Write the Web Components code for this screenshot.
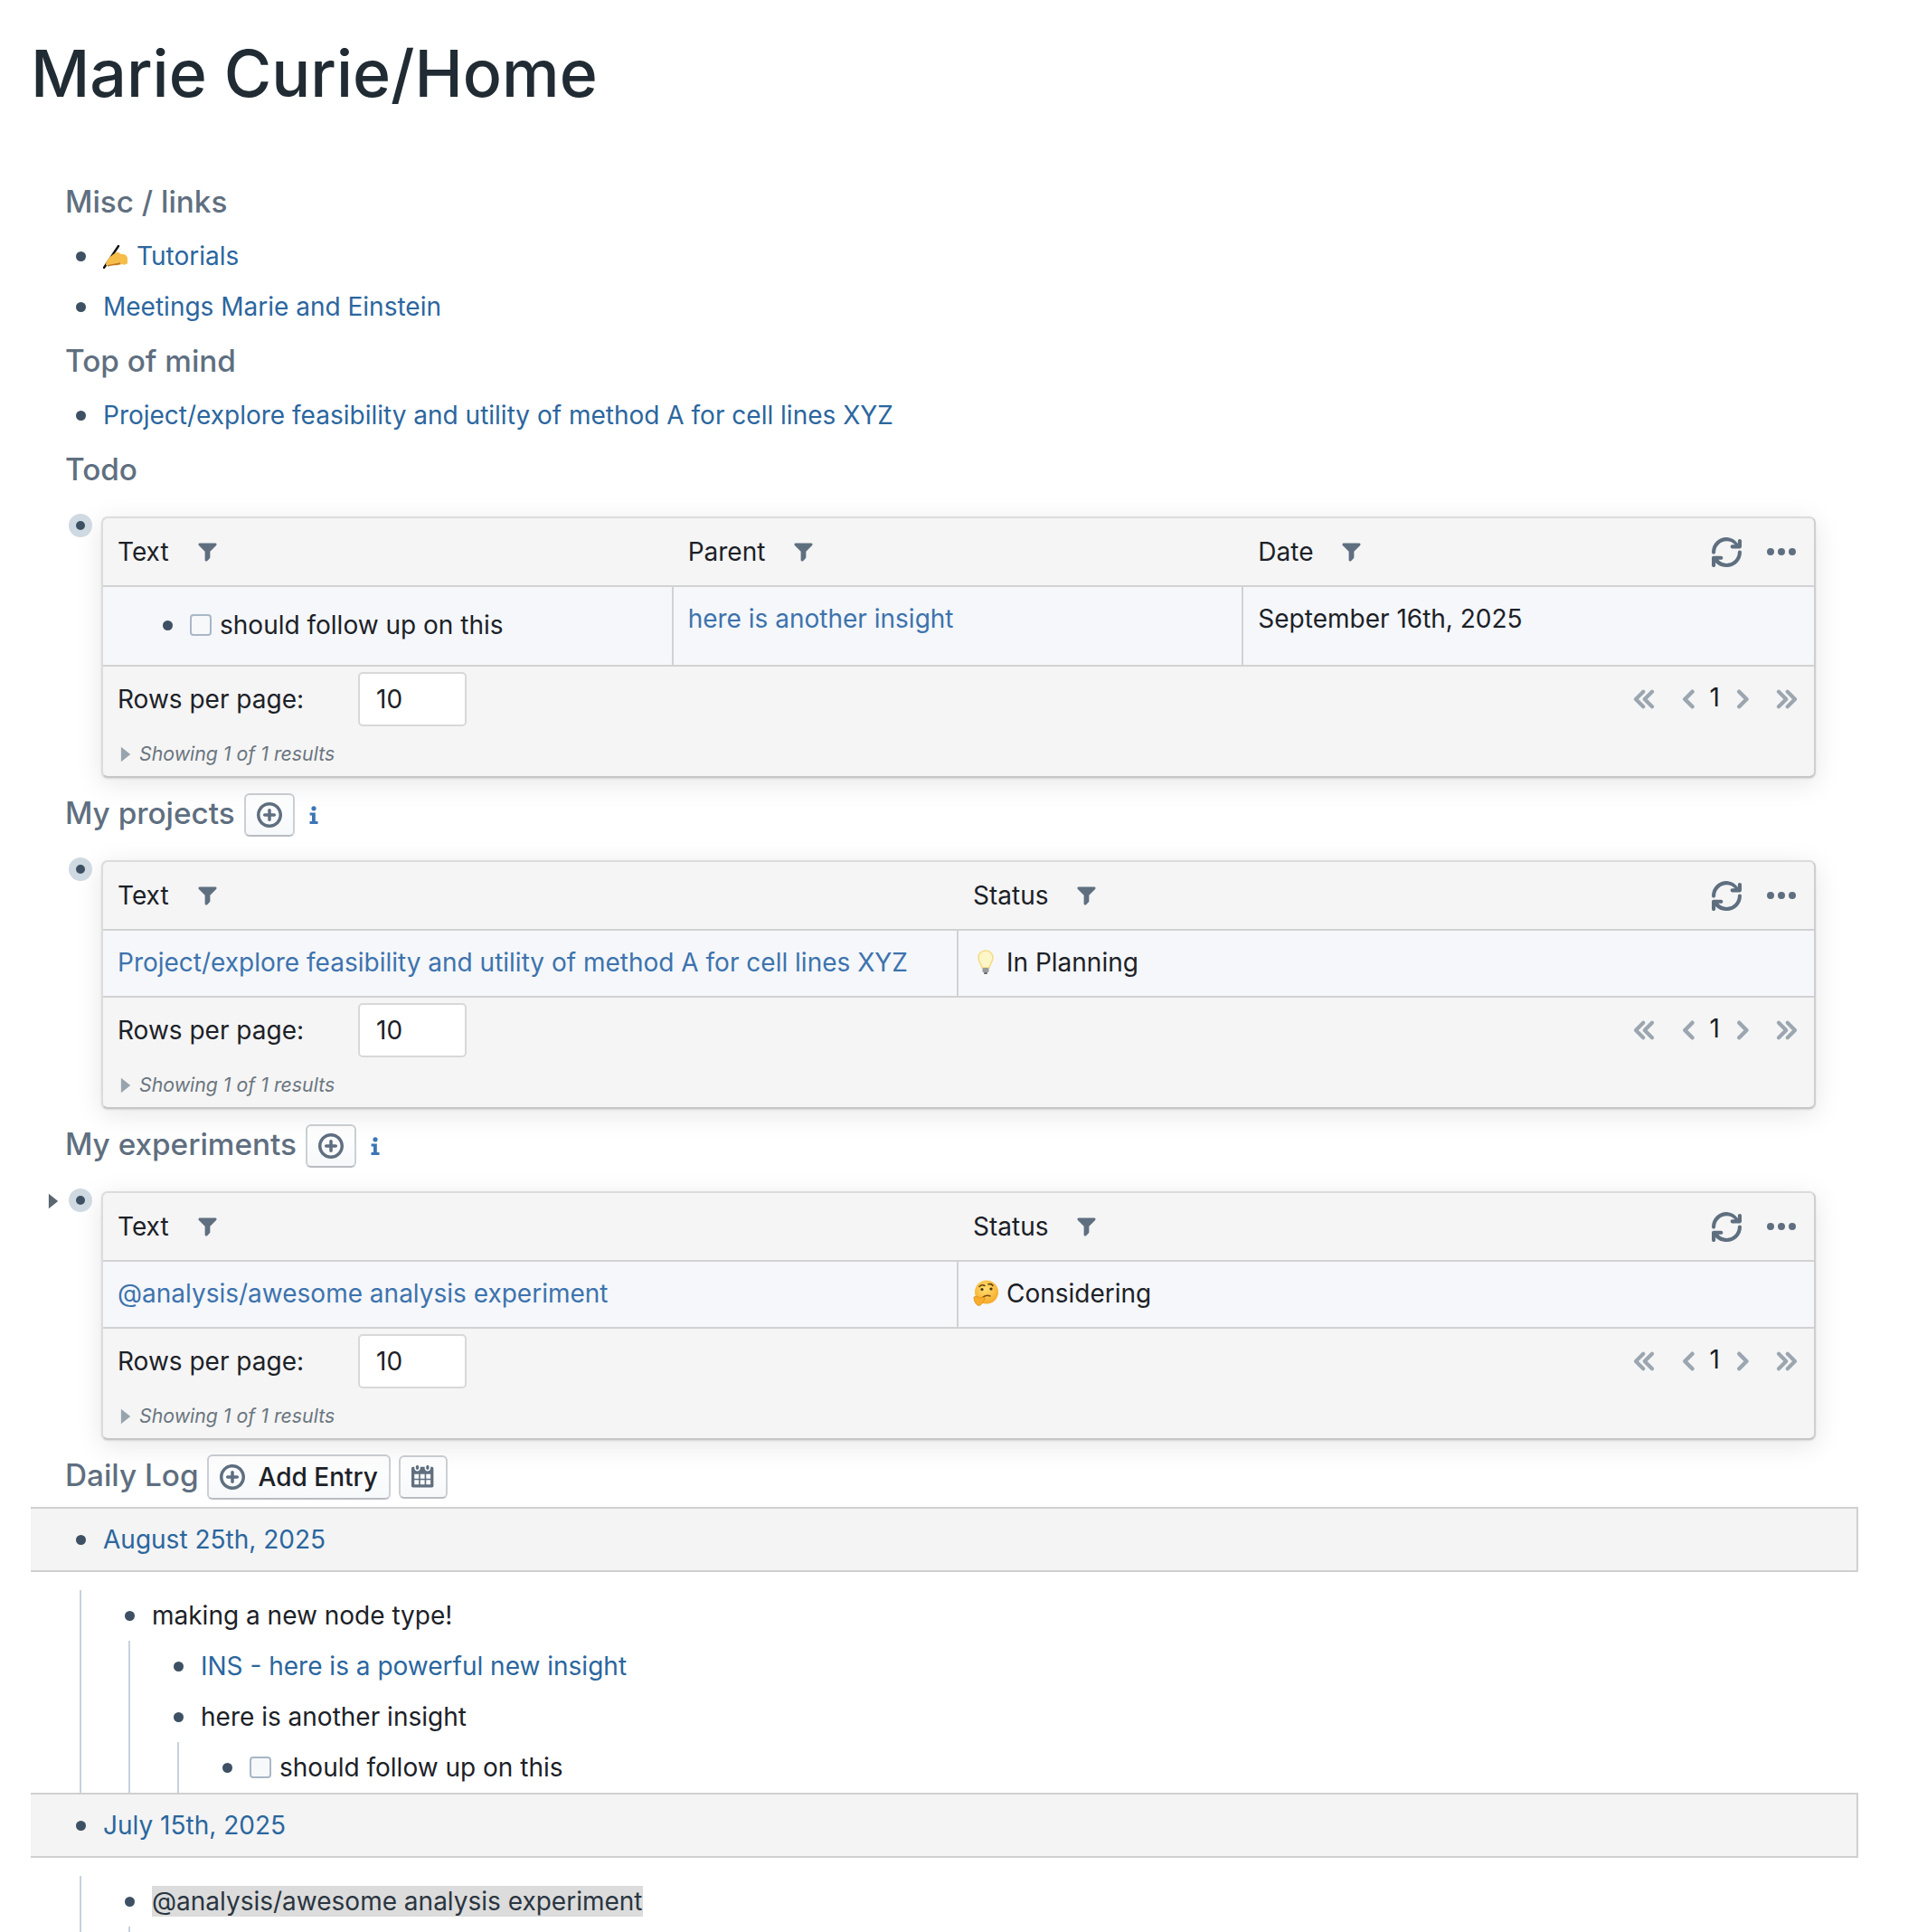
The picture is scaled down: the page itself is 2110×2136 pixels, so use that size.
<!DOCTYPE html>
<html lang="en">
<head>
<meta charset="utf-8">
<title>Marie Curie/Home</title>
<style>
  html, body { margin: 0; height: 2136px; overflow: hidden; background: #fff; }
  body { font: 28px/42px Inter, "Liberation Sans", sans-serif; color: #1c2127; }
  a { color: #2b669e; text-decoration: none; }
</style>
</head>
<body>

<page-title>Marie Curie/Home</page-title>

<section-heading>Misc / links</section-heading>
<list-group>
  <list-item><emoji-glyph name="hand"></emoji-glyph><a href="#">Tutorials</a></list-item>
  <list-item><a href="#">Meetings Marie and Einstein</a></list-item>
</list-group>

<section-heading>Top of mind</section-heading>
<list-group>
  <list-item><a href="#">Project/explore feasibility and utility of method A for cell lines XYZ</a></list-item>
</list-group>

<section-heading>Todo</section-heading>
<query-table columns="Text,Parent,Date">
  <div slot="cell" style="padding-left:16px"><list-item><todo-box></todo-box>should follow up on this</list-item></div>
  <div slot="cell"><a href="#" style="color:#3d73ad">here is another insight</a></div>
  <div slot="cell">September 16th, 2025</div>
</query-table>

<section-heading>My projects<outline-button slot="extra"><ui-icon name="add" size="28"></ui-icon></outline-button><info-mark slot="extra"></info-mark></section-heading>
<query-table columns="Text,Status">
  <div slot="cell"><a href="#" style="color:#3d73ad;white-space:nowrap">Project/explore feasibility and utility of method A for cell lines XYZ</a></div>
  <div slot="cell" style="display:flex;align-items:center"><emoji-glyph name="bulb"></emoji-glyph>In Planning</div>
</query-table>

<section-heading>My experiments<outline-button slot="extra"><ui-icon name="add" size="28"></ui-icon></outline-button><info-mark slot="extra"></info-mark></section-heading>
<query-table columns="Text,Status" fold>
  <div slot="cell"><a href="#" style="color:#3d73ad">@analysis/awesome analysis experiment</a></div>
  <div slot="cell" style="display:flex;align-items:center"><emoji-glyph name="thinking"></emoji-glyph>Considering</div>
</query-table>

<section-heading style="margin-bottom:3px;gap:9px">Daily Log<outline-button slot="extra" style="--btn-h:50px"><ui-icon name="add" size="28"></ui-icon>Add Entry</outline-button><outline-button slot="extra"><ui-icon name="calendar" size="26"></ui-icon></outline-button></section-heading>

<list-group>
  <list-item band><a href="#">August 25th, 2025</a>
    <list-item slot="kids">making a new node type!
      <list-item slot="kids"><a href="#">INS - here is a powerful new insight</a></list-item>
      <list-item slot="kids">here is another insight
        <list-item slot="kids"><todo-box></todo-box>should follow up on this</list-item>
      </list-item>
    </list-item>
  </list-item>
  <list-item band><a href="#">July 15th, 2025</a>
    <list-item slot="kids"><span style="display:inline-block;line-height:34px;background:#dcdcdc;color:#2a3540">@analysis/awesome analysis experiment</span>
      <div slot="kids" style="height:6px"></div>
    </list-item>
  </list-item>
</list-group>

<script>
const icons = {
  filter: '<path d="M13.99.99h-12a1.003 1.003 0 00-.71 1.71l4.71 4.71V14a1.003 1.003 0 001.71.71l2-2c.18-.18.29-.43.29-.71V7.41L14.7 2.7a1.003 1.003 0 00-.71-1.71z"/>',
  refresh: '<path d="M15 1c-.55 0-1 .45-1 1v1.43A7.96 7.96 0 008 0C3.58 0 0 3.58 0 8c0 .55.45 1 1 1s1-.45 1-1c0-3.31 2.69-6 6-6 1.77 0 3.36.78 4.46 2H11c-.55 0-1 .45-1 1s.45 1 1 1h4c.55 0 1-.45 1-1V2c0-.55-.45-1-1-1zm0 6c-.55 0-1 .45-1 1 0 3.31-2.69 6-6 6-1.77 0-3.36-.78-4.46-2H5c.55 0 1-.45 1-1s-.45-1-1-1H1c-.55 0-1 .45-1 1v4c0 .55.45 1 1 1s1-.45 1-1v-1.43A7.96 7.96 0 008 16c4.42 0 8-3.58 8-8 0-.55-.45-1-1-1z"/>',
  more: '<path d="M2 6a2 2 0 100 4 2 2 0 100-4zM14 6a2 2 0 100 4 2 2 0 100-4zM8 6a2 2 0 100 4 2 2 0 100-4z"/>',
  add: '<path d="M11 7H9V5c0-.55-.45-1-1-1s-1 .45-1 1v2H5c-.55 0-1 .45-1 1s.45 1 1 1h2v2c0 .55.45 1 1 1s1-.45 1-1V9h2c.55 0 1-.45 1-1s-.45-1-1-1zM8 0C3.58 0 0 3.58 0 8s3.58 8 8 8 8-3.58 8-8-3.58-8-8-8zm0 14c-3.31 0-6-2.69-6-6s2.69-6 6-6 6 2.69 6 6-2.69 6-6 6z"/>',
  calendar: '<path d="M11 3c.6 0 1-.5 1-1V1c0-.6-.4-1-1-1s-1 .4-1 1v1c0 .5.4 1 1 1zm3-2h-1v1c0 1.1-.9 2-2 2s-2-.9-2-2V1H6v1c0 1.1-.9 2-2 2s-2-.9-2-2V1H1c-.6 0-1 .5-1 1v12c0 .6.4 1 1 1h13c.6 0 1-.4 1-1V2c0-.6-.5-1-1-1zM5 13H2v-3h3v3zm0-4H2V6h3v3zm4 4H6v-3h3v3zm0-4H6V6h3v3zm4 4h-3v-3h3v3zm0-4h-3V6h3v3zM4 3c.6 0 1-.5 1-1V1c0-.6-.4-1-1-1S3 .4 3 1v1c0 .5.4 1 1 1z"/>',
  first: '<path fill="none" stroke="currentColor" stroke-width="2.800" stroke-linecap="round" stroke-linejoin="round" d="M7.500 2.500L2 8l5.500 5.500M14 2.500L8.500 8l5.500 5.500"/>',
  prev: '<path fill="none" stroke="currentColor" stroke-width="3" stroke-linecap="round" stroke-linejoin="round" d="M11 2.500L5.500 8l5.500 5.500"/>',
  next: '<path fill="none" stroke="currentColor" stroke-width="3" stroke-linecap="round" stroke-linejoin="round" d="M5.500 2.500L11 8l-5.500 5.500"/>',
  last: '<path fill="none" stroke="currentColor" stroke-width="2.800" stroke-linecap="round" stroke-linejoin="round" d="M2 2.500L7.500 8 2 13.500M8.500 2.500L14 8l-5.500 5.500"/>',
  caret: '<path d="M5 2v12l7.500-6z"/>'
};

class UiIcon extends HTMLElement {
  constructor() {
    super();
    const name = this.getAttribute("name");
    const size = this.getAttribute("size") || 22;
    const color = this.getAttribute("color") || "#5f6f80";
    this.attachShadow({ mode: "open" }).innerHTML = `
      <style>:host { display: inline-flex; flex: none; color: ${color}; } svg { display: block; }</style>
      <svg width="${size}" height="${size}" viewBox="0 0 16 16" fill="${color}">${icons[name]}</svg>`;
  }
}
customElements.define("ui-icon", UiIcon);

const emoji = {
  hand: `<svg width="28" height="28" viewBox="0 0 28 28">
    <path d="M1 27L17 3" stroke="#111" stroke-width="2.400" stroke-linecap="round"/>
    <path d="M3 24c0-4 3-8 6-10 3-2 6-5 8-4 2 1 2 2 4 2 4 0 6 2 6 6v4c-2 2-4 2-6 1-3 1-6 2-9 1-3 1-7 1-9 0z" fill="#f6bd4a"/>
    <path d="M5 25c5-2 9-1 14-3" stroke="#b9762b" stroke-width="1.500" fill="none"/></svg>`,
  bulb: `<svg width="28" height="28" viewBox="0 0 28 28">
    <path d="M14 1C9.500 1 6 4.500 6 9c0 4 3 6 4 11h8c1-5 4-7 4-11 0-4.500-3.500-8-8-8z" fill="#fdf6c8" stroke="#f5dc82" stroke-width="1.500"/>
    <rect x="10.500" y="20" width="7" height="5" rx="1" fill="#9a9a9a"/><rect x="12" y="25" width="4" height="2" rx="1" fill="#666"/></svg>`,
  thinking: `<svg width="28" height="30" viewBox="0 0 28 30">
    <defs><radialGradient id="f" cx=".45" cy=".35" r=".7"><stop offset="0" stop-color="#ffdf70"/><stop offset="1" stop-color="#f5a623"/></radialGradient></defs>
    <circle cx="15" cy="13.500" r="13" fill="url(#f)"/>
    <path d="M7 7.500c2-2 4-2 6-1M17 5c2-1 4 0 5 1.500" stroke="#5b3a12" stroke-width="1.500" fill="none" stroke-linecap="round"/>
    <circle cx="10" cy="10.500" r="1.600" fill="#4a2f10"/><circle cx="20" cy="10" r="1.600" fill="#4a2f10"/>
    <path d="M11 19c3-2 6-2 8-1" stroke="#7a4a12" stroke-width="1.500" fill="none" stroke-linecap="round"/>
    <path d="M1 19c3-1 5 0 7 1 2-1 4-1 5 0 1 2-1 3-2 4-1 3-3 5-6 4-3-2-4-6-4-9z" fill="#f9ad2d" stroke="#d98a16" stroke-width=".8"/></svg>`
};

class EmojiGlyph extends HTMLElement {
  constructor() {
    super();
    this.attachShadow({ mode: "open" }).innerHTML = `
      <style>:host { display: inline-flex; flex: none; align-items: center; margin-right: 9px; } svg { display: block; }</style>
      ${emoji[this.getAttribute("name")]}`;
  }
}
customElements.define("emoji-glyph", EmojiGlyph);

const titleTemplate = document.createElement("template");
titleTemplate.innerHTML = `
<style>
  :host { display: block; padding: 37px 0 0 34px; height: 191px; box-sizing: border-box; }
  h1 { margin: 0; font-size: 71.600px; line-height: 88px; font-weight: 500; color: #202b33; }
</style>
<h1><slot></slot></h1>`;

class PageTitle extends HTMLElement {
  constructor() {
    super();
    this.attachShadow({ mode: "open" }).appendChild(titleTemplate.content.cloneNode(true));
  }
}
customElements.define("page-title", PageTitle);

const headingTemplate = document.createElement("template");
headingTemplate.innerHTML = `
<style>
  :host { display: flex; align-items: center; height: 64px; padding-left: 72px; gap: 10px; }
  h5 { margin: 0; font-size: 33.300px; line-height: 40px; font-weight: 550; color: #5f6f80; white-space: nowrap; }
  .extra { display: flex; align-items: center; gap: 9px; padding-top: 4px; }
</style>
<h5><slot></slot></h5>
<div class="extra"><slot name="extra"></slot></div>`;

class SectionHeading extends HTMLElement {
  constructor() {
    super();
    this.attachShadow({ mode: "open" }).appendChild(headingTemplate.content.cloneNode(true));
  }
}
customElements.define("section-heading", SectionHeading);

const buttonTemplate = document.createElement("template");
buttonTemplate.innerHTML = `
<style>
  :host { display: inline-flex; }
  button {
    display: flex; align-items: center; justify-content: center; gap: 15px;
    box-sizing: border-box; height: var(--btn-h, 48px); min-width: 54px; padding: 0 12px;
    background: linear-gradient(#fff, #f6f8fa); border: 2px solid #ccd0d4; border-bottom-color: #b8bcc1;
    border-radius: 6px; font: 500 28px/40px Inter, sans-serif; color: #1c2127;
  }
</style>
<button><slot></slot></button>`;

class OutlineButton extends HTMLElement {
  constructor() {
    super();
    this.attachShadow({ mode: "open" }).appendChild(buttonTemplate.content.cloneNode(true));
  }
}
customElements.define("outline-button", OutlineButton);

class InfoMark extends HTMLElement {
  constructor() {
    super();
    this.attachShadow({ mode: "open" }).innerHTML = `
      <style>:host { display: inline-flex; margin-left: 7px; } svg { display: block; }</style>
      <svg width="10" height="20" viewBox="0 0 10 20" fill="#3d75b5">
        <circle cx="5" cy="2.800" r="2.600"/>
        <path d="M.6 7.500h6.200v9.500H9.500V20H.5v-3h2.500v-6.500H.6z"/>
      </svg>`;
  }
}
customElements.define("info-mark", InfoMark);

class ListGroup extends HTMLElement {
  constructor() {
    super();
    this.attachShadow({ mode: "open" }).innerHTML = `
      <style>:host { display: block; margin: 0 55px 0 34px; }</style>
      <slot></slot>`;
  }
}
customElements.define("list-group", ListGroup);

const itemTemplate = document.createElement("template");
itemTemplate.innerHTML = `
<style>
  :host { display: block; }
  .row { display: flex; align-items: center; height: 56px; padding-left: 50px; }
  .dot { flex: none; width: 11px; height: 11px; border-radius: 50%; background: #3e5063; margin-right: 19px; }
  .kids { margin-left: 54px; box-shadow: inset 2px 0 0 #c6d2de; }
  :host([band]) .row {
    height: 72px; box-sizing: border-box; background: #f4f4f4;
    border: solid #d0d0d0; border-width: 2px 2px 2px 0;
  }
  :host([band]) .kids { margin-top: 20px; }
  .content { display: flex; align-items: center; white-space: nowrap; }
</style>
<div class="row"><span class="dot"></span><span class="content"><slot></slot></span></div>
<div class="kids"><slot name="kids"></slot></div>`;

class ListItem extends HTMLElement {
  constructor() {
    super();
    this.attachShadow({ mode: "open" }).appendChild(itemTemplate.content.cloneNode(true));
  }
}
customElements.define("list-item", ListItem);

const checkTemplate = document.createElement("template");
checkTemplate.innerHTML = `
<style>
  :host { display: inline-block; flex: none; width: 24px; height: 24px; box-sizing: border-box; margin-right: 9px;
    background: #f6f8fa; border: 2px solid #a9b7c6; border-radius: 4px; }
</style>`;

class TodoBox extends HTMLElement {
  constructor() {
    super();
    this.attachShadow({ mode: "open" }).appendChild(checkTemplate.content.cloneNode(true));
  }
}
customElements.define("todo-box", TodoBox);

const footerTemplate = document.createElement("template");
footerTemplate.innerHTML = `
<style>
  :host { display: block; height: 121px; box-sizing: border-box; padding: 6px 18px 0 16px; }
  .top { display: flex; align-items: center; height: 60px; }
  .label { width: 266px; }
  .input { box-sizing: border-box; width: 120px; height: 60px; padding-left: 18px; line-height: 56px;
    background: #fff; border: 2px solid #d8d8d8; border-radius: 5px; }
  .pages { margin-left: auto; display: flex; align-items: center; }
  .num { margin: 0 13px 0 12px; line-height: 36px; padding-bottom: 4px; }
  .gap { width: 25px; }
  .meta { display: flex; align-items: center; height: 36px; margin-top: 12px; padding-left: 1px;
    font-size: 21.300px; font-style: italic; color: #6b7680; }
  .meta ui-icon { margin: 2px 5px 0 -4px; }
</style>
<div class="top">
  <span class="label">Rows per page:</span>
  <span class="input">10</span>
  <span class="pages">
    <ui-icon name="first" size="24" color="#9ba6b0"></ui-icon><span class="gap"></span>
    <ui-icon name="prev" size="24" color="#9ba6b0"></ui-icon>
    <span class="num">1</span>
    <ui-icon name="next" size="24" color="#9ba6b0"></ui-icon><span class="gap"></span>
    <ui-icon name="last" size="24" color="#9ba6b0"></ui-icon>
  </span>
</div>
<div class="meta"><ui-icon name="caret" size="22" color="#97a3ad"></ui-icon>Showing 1 of 1 results</div>`;

class TableFooter extends HTMLElement {
  constructor() {
    super();
    this.attachShadow({ mode: "open" }).appendChild(footerTemplate.content.cloneNode(true));
  }
}
customElements.define("table-footer", TableFooter);

const tableTemplate = document.createElement("template");
tableTemplate.innerHTML = `
<style>
  :host { display: block; position: relative; margin: 20px 102px 7px 112px; }
  .knob { position: absolute; left: -36px; top: -3px; width: 26px; height: 26px; border-radius: 50%;
    background: #cfd9e2; display: flex; align-items: center; justify-content: center; }
  .knob i { width: 10px; height: 10px; border-radius: 50%; background: #3e5063; }
  .fold { position: absolute; left: -65px; top: 0; display: none; }
  :host([fold]) .fold { display: flex; }
  .box { background: #f5f5f5; border: 2px solid #dcdcdc; border-bottom-color: #c6c6c6; border-right-color: #cfcfcf;
    border-radius: 7px; box-shadow: 0 6px 30px rgba(16,22,26,.1), 0 1px 2px rgba(16,22,26,.12); }
  .head, .body { display: grid; border-bottom: 2px solid #d2d2d2; box-sizing: border-box; }
  .head { height: 76px; }
  .body { background: #f5f7fa; }
  .th { display: flex; align-items: center; padding: 0 20px 0 16px; gap: 31px; }
  .tools { margin-left: auto; display: flex; align-items: center; gap: 28px; }
  ::slotted([slot="cell"]) { padding: 14px 16px 16px; min-height: 42px; border-right: 2px solid #d2d2d2; color: #1c2127; }
  ::slotted([slot="cell"]:last-child) { border-right: 0; }
</style>
<div class="fold"><ui-icon name="caret" size="22" color="#5c6670"></ui-icon></div>
<div class="knob"><i></i></div>
<div class="box">
  <div class="head"></div>
  <div class="body"><slot name="cell"></slot></div>
  <table-footer></table-footer>
</div>`;

class QueryTable extends HTMLElement {
  constructor() {
    super();
    const root = this.attachShadow({ mode: "open" });
    root.appendChild(tableTemplate.content.cloneNode(true));
    const cols = (this.getAttribute("columns") || "").split(",");
    const head = root.querySelector(".head");
    const grid = `repeat(${cols.length}, minmax(0, 1fr))`;
    head.style.gridTemplateColumns = grid;
    root.querySelector(".body").style.gridTemplateColumns = grid;
    cols.forEach((name, i) => {
      const th = document.createElement("div");
      th.className = "th";
      th.innerHTML = `<span>${name}</span><ui-icon name="filter" size="23"></ui-icon>`;
      if (i === cols.length - 1) {
        th.insertAdjacentHTML("beforeend",
          `<span class="tools"><ui-icon name="refresh" size="33"></ui-icon><ui-icon name="more" size="32"></ui-icon></span>`);
      }
      head.appendChild(th);
    });
  }
}
customElements.define("query-table", QueryTable);
</script>
</body>
</html>
